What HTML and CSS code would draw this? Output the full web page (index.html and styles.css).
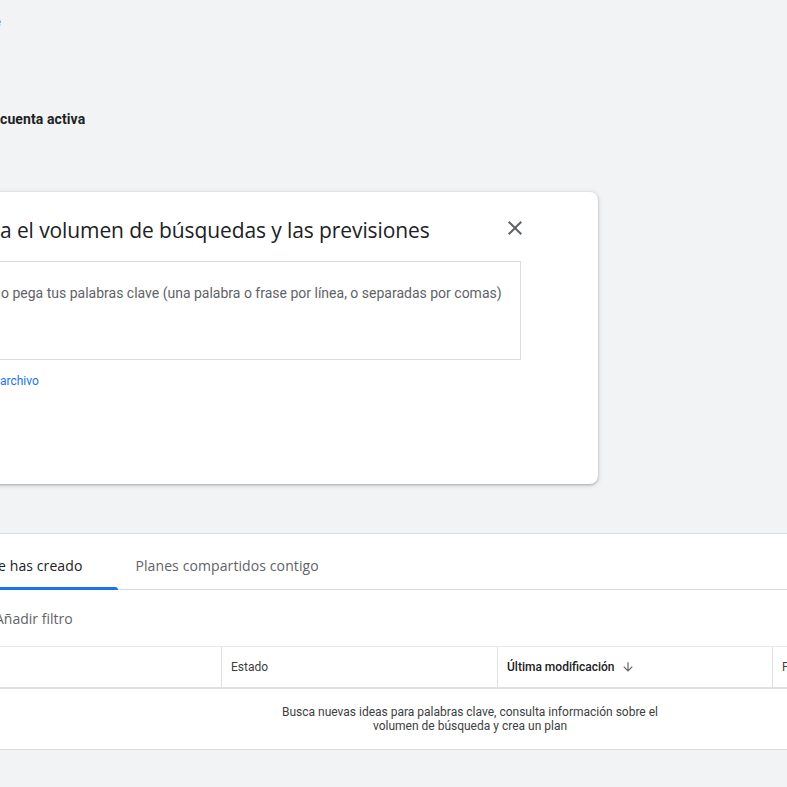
FILE: index.html
```
<!DOCTYPE html>
<html lang="es">
<head>
<meta charset="utf-8">
<link rel="stylesheet" href="styles.css">
</head>
<body>
<div class="page">
  <div class="crumb">e</div>
  <h2 class="account">cuenta activa</h2>

  <section class="card">
    <div class="card-head">
      <h1 class="card-title">a el volumen de búsquedas y las previsiones</h1>
      <button class="close" aria-label="Cerrar">
        <svg width="24" height="24" viewBox="0 0 24 24"><path d="M19 6.41 17.59 5 12 10.59 6.41 5 5 6.41 10.59 12 5 17.59 6.41 19 12 13.41 17.59 19 19 17.59 13.41 12z" fill="#5f6368"/></svg>
      </button>
    </div>
    <div class="input-box">o pega tus palabras clave (una palabra o frase por línea, o separadas por comas)</div>
    <a class="link">archivo</a>
  </section>

  <section class="plans">
    <div class="tabs">
      <div class="tab active">e has creado</div>
      <div class="tab">Planes compartidos contigo</div>
    </div>
    <div class="filter">Añadir filtro</div>
    <div class="thead">
      <div class="th th-name"></div>
      <div class="th th-state">Estado</div>
      <div class="th th-mod">Última modificación <span class="arrow">
        <svg width="14" height="14" viewBox="0 0 24 24"><path d="M20 12l-1.41-1.41L13 16.17V4h-2v12.17l-5.58-5.59L4 12l8 8 8-8z" fill="#5f6368"/></svg></span></div>
      <div class="th th-last">F</div>
    </div>
    <div class="tbody">
      <p class="empty">Busca nuevas ideas para palabras clave, consulta información sobre el volumen de búsqueda y crea un plan</p>
    </div>
  </section>
</div>
</body>
</html>
```
FILE: styles.css
```
* { box-sizing: border-box; }
html, body { margin: 0; padding: 0; }
body {
  background: #f1f3f4;
  font-family: Roboto, "Liberation Sans", sans-serif;
  color: #202124;
  width: 787px;
  height: 787px;
  overflow: hidden;
}
.page { padding-top: 14px; }
.crumb {
  margin-left: -6px;
  height: 16px;
  font-size: 13px;
  line-height: 16px;
  color: #1a73e8;
}
.account {
  margin: 80px 0 0 0;
  font-size: 14px;
  line-height: 18px;
  font-weight: 700;
  letter-spacing: 0.1px;
  color: #202124;
}
.card {
  margin: 64px 0 0 -40px;
  width: 638px;
  height: 292px;
  background: #fff;
  border-radius: 8px;
  box-shadow: 0 1px 2px rgba(60,64,67,.3), 0 1px 4px 1px rgba(60,64,67,.15);
  padding: 24px 77px 0 40px;
}
.card-head {
  display: flex;
  align-items: center;
  justify-content: space-between;
  height: 28px;
}
.card-title {
  margin: 0;
  font-family: "Open Sans", Roboto, sans-serif;
  font-size: 21px;
  font-weight: 400;
  letter-spacing: -0.1px;
  color: #202124;
  line-height: 28px;
}
.close {
  border: 0;
  background: none;
  padding: 0;
  width: 24px;
  height: 24px;
  margin: 0 -6px 4px 0;
}
.input-box {
  margin: 17px 0 0 -40px;
  height: 99px;
  border: 1px solid #dadce0;
  padding: 22px 0 0 40px;
  font-size: 14px;
  line-height: 18px;
  color: #5f6368;
}
.link {
  display: block;
  margin-top: 13px;
  font-size: 12px;
  line-height: 16px;
  color: #1a73e8;
}
.plans {
  margin: 49px 0 0 -40px;
  width: 900px;
  background: #fff;
  border-top: 1px solid #dadce0;
  border-bottom: 1px solid #dadce0;
}
.tabs {
  display: flex;
  height: 56px;
  padding-top: 8px;
  border-bottom: 1px solid #dadce0;
  font-family: "Open Sans", Roboto, sans-serif;
  font-size: 14px;
}
.tab {
  display: flex;
  align-items: center;
  color: #5f6368;
  position: relative;
  letter-spacing: 0.1px;
}
.tab.active {
  color: #202124;
  padding: 0 36px 0 38px;
  margin-right: 17px;
}
.tab.active::after {
  content: "";
  position: absolute;
  left: 0; right: 0; bottom: -1px;
  height: 3px;
  background: #1a73e8;
  border-radius: 3px 3px 0 0;
}
.filter {
  height: 56px;
  display: flex;
  align-items: center;
  padding-left: 35px;
  font-family: "Open Sans", Roboto, sans-serif;
  font-size: 14px;
  color: #5f6368;
}
.thead {
  display: flex;
  height: 43px;
  border-top: 1px solid #e8eaed;
  border-bottom: 2px solid #e0e0e0;
  font-size: 12px;
  color: #3c4043;
}
.th {
  display: flex;
  align-items: center;
  padding-left: 9px;
  border-left: 1px solid #e0e0e0;
}
.th-name { width: 261px; border-left: 0; }
.th-state { width: 276px; }
.th-mod { width: 275px; font-weight: 500; color: #202124; }
.th-last { flex: 1; }
.arrow { display: inline-flex; margin-left: 6px; }
.tbody {
  height: 60px;
  padding-top: 16px;
}
.empty {
  margin: 0 0 0 312px;
  width: 396px;
  text-align: center;
  font-size: 12px;
  line-height: 14px;
  color: #3c4043;
}
```
